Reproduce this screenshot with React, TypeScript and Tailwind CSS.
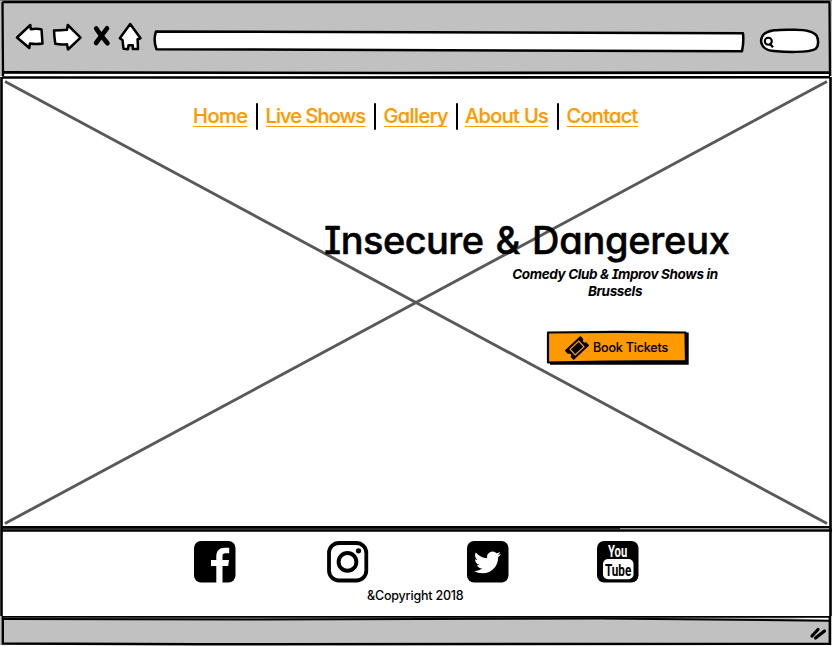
import React from "react";

const sketchFont =
  "font-['Inter','Liberation_Sans',sans-serif] [font-feature-settings:'cv11','cv08','ss03']";

const links = [
  { label: "Home", box: "w-[54px]", track: "tracking-[-0.5px]" },
  { label: "Live Shows", box: "w-[99.5px]", track: "tracking-[-0.9px]" },
  { label: "Gallery", box: "w-[63px]", track: "tracking-[-0.6px]" },
  { label: "About Us", box: "w-[83px]", track: "tracking-[-0.65px]" },
  { label: "Contact", box: "w-[71px]", track: "tracking-[-0.7px]" },
];

function Toolbar() {
  return (
    <header className="relative h-[76px] w-full shrink-0 bg-[#c1c1c1]">
      <svg className="absolute inset-0" width="832" height="80" viewBox="0 0 832 80" fill="none" stroke="#000" strokeWidth="2" strokeLinejoin="round">
        <path d="M0 .5H832" stroke="#7d807d" strokeWidth="1" />
        <path d="M3 73.5H829V76H3Z" fill="#fff" stroke="none" />
        <path d="M2.500 2H829.500L830 76M2.500 2L3 76" strokeWidth="2.300" />
        <path d="M3 72.400L400 73L829 72.600" strokeWidth="2.600" />
        <g fill="#fff" strokeWidth="2.500">
          <path d="M17 37.500L30.300 25L30.800 29.200Q37 28.300 41.500 29.400L42.500 43.500Q36 44.500 30 43.500L29.300 48Z" />
          <path d="M54 30.500Q60 30.500 67 29.800L67.800 25L80.500 37.700L68 49.500L67 44.300Q61 45 55.300 43.800Q54.300 37 54 30.500Z" />
          <path d="M130.200 24L140.500 38.300L137.600 39.200L138 49H132.800V45.300H128.500L128 49.200L123.500 48.700L122.500 40L119.800 38.200Z" />
          <path d="M156 31.500Q350 33 743 33.300Q744 42 742 51.300Q420 51.300 156.500 49.200Q153 40 156 31.500Z" />
          <path d="M762 37C765 29 782 29.500 793 29.700C805 29.500 814 31.500 816.800 36C818.500 40 819 46 815.500 49C808 53 785 52 774 51C764 50.500 759 44 762 37Z" />
        </g>
        <path d="M96.200 28.500Q99 33 107.500 43.300" strokeWidth="4.600" strokeLinecap="round" />
        <path d="M107 28.300Q102 35 96 43" strokeWidth="4.600" strokeLinecap="round" />
        <circle cx="768.300" cy="41.300" r="3.500" strokeWidth="2.100" />
        <path d="M769.500 43.500L773 47.200" strokeWidth="2.400" />
      </svg>
    </header>
  );
}

function TicketIcon() {
  return (
    <svg width="24" height="24" viewBox="0 0 24 24" className="shrink-0">
      <g transform="rotate(-43 12 12)">
        <path d="M1.800 6H22.200V9.600A2.500 2.500 0 0 0 22.200 14.400V18H1.800V14.400A2.500 2.500 0 0 0 1.800 9.600Z" fill="#000" stroke="#000" strokeLinejoin="round" />
        <path d="M6 8.200H18V15.800H6Z" fill="none" stroke="#ff9900" strokeWidth="1.200" />
      </g>
    </svg>
  );
}

function Hero() {
  return (
    <main className="relative h-[452px] w-full shrink-0 bg-white">
      <svg className="absolute inset-0" width="832" height="452" viewBox="0 0 832 452" fill="none">
        <path d="M5 5.500L827 447.500M827 5.500L5 447.500" stroke="#595959" strokeWidth="2.900" />
        <path d="M2 1.500L830 1.300" stroke="#000" strokeWidth="2.600" />
        <path d="M2 451H830" stroke="#000" strokeWidth="2.200" />
        <path d="M1.500 1V452M830.500 1V452" stroke="#000" strokeWidth="2.600" />
      </svg>
      <div className="relative flex flex-col">
        <nav className="flex items-start pl-[193px] pt-[27px]">
          {links.map((l, i) => (
            <React.Fragment key={l.label}>
              {i > 0 && <span className="ml-[9px] mr-[7.500px] h-[27px] w-[2px] shrink-0 rounded-sm bg-black" />}
              <a className={`${l.box} ${l.track} mt-[1px] h-[22.500px] shrink-0 whitespace-nowrap border-b-[1.500px] border-[#ff9900] text-[20px] leading-[24px] font-medium text-[#ff9900] [-webkit-text-stroke:0.2px_#ff9900]`}>{l.label}</a>
            </React.Fragment>
          ))}
        </nav>
        <h1 className="mt-[86px] h-[49px] whitespace-nowrap pl-[324px] text-[38px] font-medium leading-[49px] tracking-[-0.550px] [word-spacing:2.500px] [-webkit-text-stroke:0.5px_#000]">Insecure &amp; <span className="tracking-[-0.250px]">Dangereux</span></h1>
        <p className="ml-[495px] h-[35px] w-[240px] pt-[0.500px] text-center text-[13.500px] font-bold italic leading-[17px] tracking-[-0.370px]">
          Comedy Club &amp; Improv Shows in
          <br />
          Brussels
        </p>
        <button className="relative ml-[546px] mt-[30px] flex h-[36px] w-[144px] items-center pl-[19px] text-[12.500px] font-medium tracking-[-0.170px]">
          <svg className="absolute inset-0" width="144" height="36" viewBox="0 0 144 36">
            <path d="M4 5L142.700 2.500V34.700H4Z" fill="#000" />
            <path d="M2 2.500L70 1.800L139.500 2.500L140 31L60 31.500L2 32.500Z" fill="#ff9900" stroke="#000" strokeWidth="2.200" strokeLinejoin="round" />
          </svg>
          <span className="relative flex items-center gap-[4px]">
            <TicketIcon />
            <span className="whitespace-nowrap [-webkit-text-stroke:0.1px_#000]">Book Tickets</span>
          </span>
        </button>
      </div>
    </main>
  );
}

function Facebook() {
  return (
    <svg width="42" height="42" viewBox="0 0 42 42">
      <rect x="0" y="0" width="41.500" height="41.500" rx="7" fill="#000" />
      <path d="M22.300 42V25H17V19H22.300V15.500C22.300 9.500 25.500 6.700 30.500 6.700H35.200V12.200H31.500C29.200 12.200 28.500 13.200 28.500 15.300V19H35L34.200 25H28.500V42Z" fill="#fff" />
    </svg>
  );
}

function Instagram() {
  return (
    <svg width="42" height="42" viewBox="0 0 42 42" fill="none" stroke="#000">
      <rect x="2" y="2" width="37.300" height="37.500" rx="10" strokeWidth="3.800" />
      <circle cx="20.500" cy="20.900" r="8.900" strokeWidth="3.900" />
      <circle cx="31.500" cy="9.800" r="2.600" fill="#000" stroke="none" />
    </svg>
  );
}

function Twitter() {
  return (
    <svg width="42" height="42" viewBox="0 0 42 42">
      <rect x="0" y="0" width="41.500" height="41.500" rx="7" fill="#000" />
      <g transform="translate(7 8) scale(1.120)">
        <path fill="#fff" d="M23.953 4.570a10 10 0 01-2.825.775 4.958 4.958 0 002.163-2.723c-.951.555-2.005.959-3.127 1.184a4.920 4.920 0 00-8.384 4.482C7.690 8.095 4.067 6.130 1.640 3.162a4.822 4.822 0 00-.666 2.475c0 1.710.87 3.213 2.188 4.096a4.904 4.904 0 01-2.228-.616v.06a4.923 4.923 0 003.946 4.827 4.996 4.996 0 01-2.212.085 4.936 4.936 0 004.604 3.417 9.867 9.867 0 01-6.102 2.105c-.39 0-.779-.023-1.170-.067a13.995 13.995 0 007.557 2.209c9.053 0 13.998-7.496 13.998-13.985 0-.21 0-.42-.015-.63A9.935 9.935 0 0024 4.590z" />
      </g>
    </svg>
  );
}

function YouTube() {
  return (
    <svg width="42" height="42" viewBox="0 0 42 42" fontFamily="Liberation Sans Narrow, Roboto, Liberation Sans, sans-serif" fontWeight="bold">
      <rect x="0" y="0" width="41.500" height="41.500" rx="7" fill="#000" />
      <rect x="6" y="18" width="30.500" height="20.300" rx="5" fill="#fff" />
      <text transform="translate(11 15.700) scale(.64 1)" fontSize="17" fill="#fff" textLength="30" lengthAdjust="spacingAndGlyphs">You</text>
      <text transform="translate(8 34.900) scale(.64 1)" fontSize="17.300" fill="#000" textLength="41" lengthAdjust="spacingAndGlyphs">Tube</text>
    </svg>
  );
}

function Footer() {
  return (
    <footer className="relative h-[88px] w-full shrink-0 bg-white">
      <svg className="absolute inset-0" width="832" height="88" viewBox="0 0 832 88" fill="none" stroke="#000">
        <path d="M2 .5H832" stroke="#999" strokeWidth="1" />
        <path d="M2 .6H620" stroke="#222" strokeWidth="1.200" />
        <path d="M2 2.500H832" strokeWidth="2.700" />
        <path d="M1.500 0L1.500 88M830.500 0V88" strokeWidth="2.600" />
      </svg>
      <div className="relative flex pl-[194px] pt-[13px]">
        <Facebook />
        <span className="ml-[91px]"><Instagram /></span>
        <span className="ml-[98px]"><Twitter /></span>
        <span className="ml-[88px]"><YouTube /></span>
      </div>
      <p className="relative mt-[4px] whitespace-nowrap pl-[367px] text-[12.500px] font-medium leading-[18px] tracking-[-0.190px]">&amp;Copyright 2018</p>
    </footer>
  );
}

function StatusBar() {
  return (
    <div className="relative h-[30px] w-full shrink-0 bg-[#c1c1c1]">
      <svg className="absolute inset-0" width="832" height="30" viewBox="0 0 832 30" fill="none" stroke="#000">
        <path d="M0 29.500H832" stroke="#fff" strokeWidth="1" />
        <path d="M780 1.500H829V4Z" fill="#fff" stroke="none" />
        <path d="M2 .5H830" strokeWidth="2.300" />
        <path d="M2 1.800L740 1.500" stroke="#333" strokeWidth="1" />
        <path d="M3 3L250 3.500L600 2.500L829 4.700" strokeWidth="2" />
        <path d="M2.800 0V27.500L200 28.300L829.800 27.800V0" strokeWidth="2.400" />
        <path d="M812 20L818 13.500M815.500 22L824.500 15" strokeWidth="3.200" strokeLinecap="round" />
      </svg>
    </div>
  );
}

export default function App() {
  return (
    <div className={`${sketchFont} flex h-[646px] w-[832px] flex-col overflow-hidden bg-white text-black`}>
      <Toolbar />
      <Hero />
      <Footer />
      <StatusBar />
    </div>
  );
}
